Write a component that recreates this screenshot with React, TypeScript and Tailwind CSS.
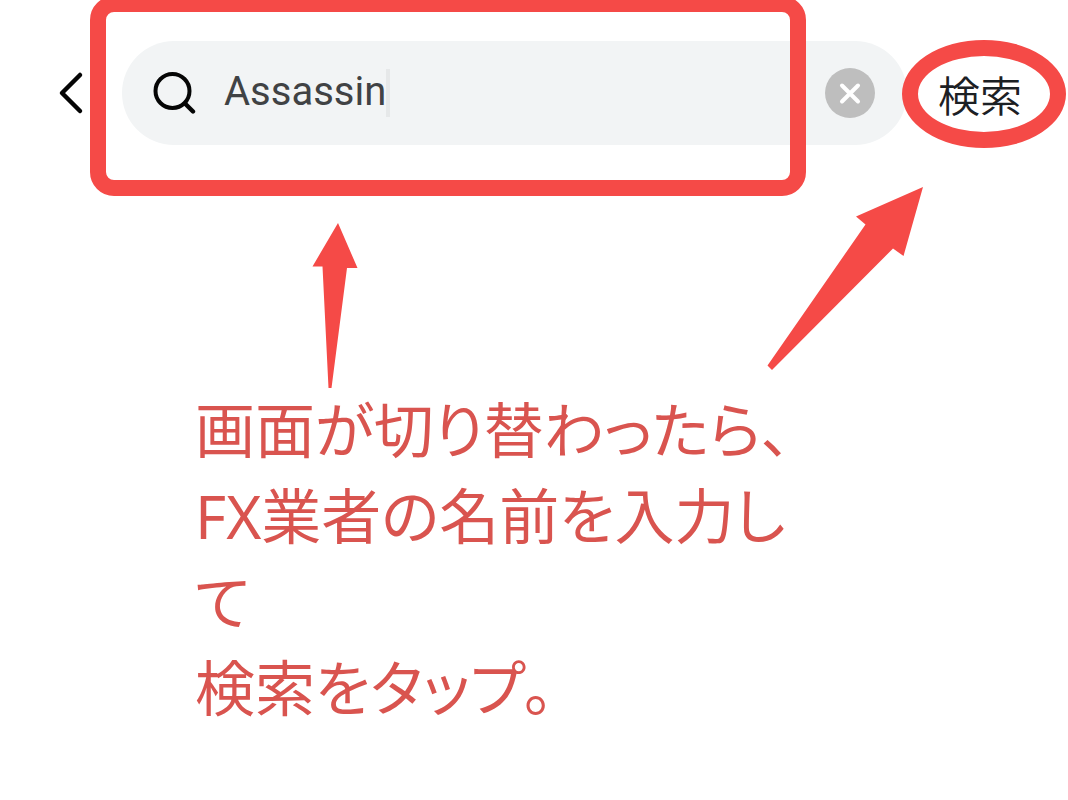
function BackIcon() {
  return (
    <svg width="28" height="44" viewBox="0 0 28 44" fill="none" aria-hidden="true">
      <path d="M24 4 6 22l18 18" stroke="#050505" strokeWidth="4.5" strokeLinecap="round" strokeLinejoin="round" />
    </svg>
  );
}

function SearchIcon() {
  return (
    <svg className="shrink-0" width="44" height="44" viewBox="0 0 44 44" fill="none" aria-hidden="true">
      <circle cx="20.5" cy="20" r="17" stroke="#050505" strokeWidth="4" />
      <path d="m33 32.500 8 8" stroke="#050505" strokeWidth="4.4" strokeLinecap="round" />
    </svg>
  );
}

function ClearIcon() {
  return (
    <svg width="50" height="50" viewBox="0 0 50 50" fill="none" aria-hidden="true">
      <circle cx="25" cy="25" r="25" fill="#bebebe" />
      <path d="m17 17.500 16 16M33 17.500l-16 16" stroke="#fff" strokeWidth="4" strokeLinecap="round" />
    </svg>
  );
}

function SearchHeader() {
  return (
    <header className="flex items-center pt-[41px] pr-[46px] pl-[56px]">
      <button type="button" aria-label="戻る" className="mr-[38px] shrink-0">
        <BackIcon />
      </button>
      <div className="relative flex h-[104px] min-w-0 flex-1 items-center rounded-full bg-[#f2f4f5] pr-8 pl-[30px]">
        <SearchIcon />
        <input
          type="text"
          aria-label="検索キーワード"
          defaultValue="Assassin"
          size={8}
          className="ml-7 h-14 w-[162px] bg-transparent p-0 pb-1 font-[Roboto,sans-serif] text-[40px] leading-[52px] text-[#404244] outline-none"
        />
        <span className="h-12 w-1 bg-[#e6e8e9]" />
        <button type="button" aria-label="クリア" className="ml-auto shrink-0">
          <ClearIcon />
        </button>
        <div className="pointer-events-none absolute -top-[45px] right-[101px] -bottom-[51px] -left-8 rounded-[24px] border-16 border-[#f54a47]" />
      </div>
      <div className="relative ml-[31px] shrink-0">
        <button type="button" className="block pt-0.5 text-[42px] leading-[60px] font-[350] text-[#1c2024]">
          検索
        </button>
        <div className="pointer-events-none absolute -top-[22px] -right-11 -bottom-6 -left-9 rounded-[50%] border-16 border-[#f54a47]" />
      </div>
    </header>
  );
}

function Arrows() {
  return (
    <svg
      className="pointer-events-none absolute top-[180px] left-[300px]"
      width="640"
      height="220"
      viewBox="300 180 640 220"
      fill="#f54a47"
      aria-hidden="true"
    >
      <path d="M338 223 357.500 268H347L331.500 388H328.500L322.500 266.500H312.500Z" />
      <path d="M923 187 903.500 256 893 248.500 772 370 767.500 365.500 865.500 224.500 856 216.500Z" />
    </svg>
  );
}

export default function App() {
  return (
    <div className="relative min-h-screen overflow-x-hidden bg-white font-['Noto_Sans_CJK_JP',sans-serif]">
      <SearchHeader />
      <Arrows />
      <main
        lang="ja"
        className="mt-[242px] ml-[195px] max-w-[620px] font-['Noto_Sans','Noto_Sans_CJK_JP',sans-serif] text-[60px] leading-[86px] text-[#d9544f] [font-feature-settings:'palt']"
      >
        <p>画面が切り替わったら、</p>
        <p>FX業者の名前を入力して</p>
        <p>検索をタップ。</p>
      </main>
    </div>
  );
}
